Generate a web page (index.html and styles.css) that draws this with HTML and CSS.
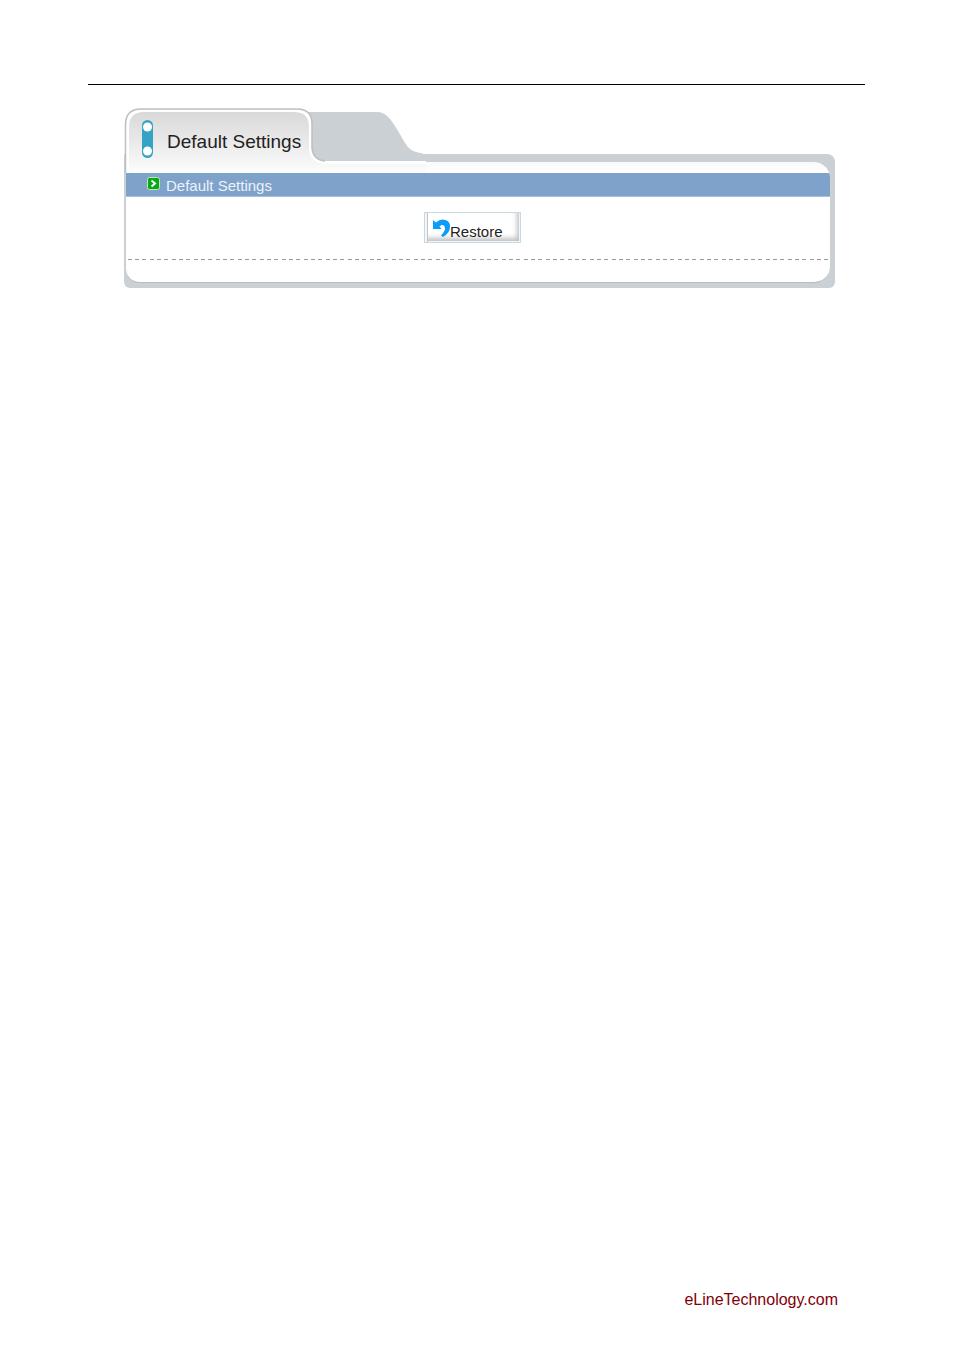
FILE: index.html
```html
<!DOCTYPE html>
<html lang="en">
<head>
<meta charset="utf-8">
<title>Default Settings</title>
<link rel="stylesheet" href="styles.css">
</head>
<body>
<div class="page">
  <hr class="rule">
  <main class="panel">
    <svg class="tab-shape" width="302" height="65" viewBox="0 0 302 65" aria-hidden="true">
      <defs>
        <linearGradient id="tabFill" x1="0" y1="0" x2="0" y2="1">
          <stop offset="0" stop-color="#d9d9d9"/>
          <stop offset="0.5" stop-color="#eaeaea"/>
          <stop offset="1" stop-color="#fdfdfd"/>
        </linearGradient>
      </defs>
      <path fill="#cad0d4" d="M176 4H254Q260 4 266 11C275 22 280 36 286 41C291 45 296 44 302 47V54H176Z"/>
      <path fill="#fff" d="M1 65V17Q1 1 17 1H173Q188 1 188 16V40Q189 52 201 53H302V65Z"/>
      <path fill="none" stroke="#bdbfc0" stroke-width="1.5" d="M1.5 65V17Q1.5 1 17 1H173Q188 1 188 16V40Q189 52 201 53"/>
      <path fill="url(#tabFill)" d="M5 65V19Q5 4 20 4H170Q185 4 185 19V42Q187 55 201 56H302V65Z"/>
    </svg>
    <header class="tab">
      <svg class="tab-icon" width="13" height="38" viewBox="0 0 13 38" aria-hidden="true">
        <rect x="1" width="11" height="38" rx="5.5" fill="#36a2c6"/>
        <circle cx="6.5" cy="7" r="4.5" fill="#fff"/>
        <circle cx="6.5" cy="31" r="4.5" fill="#fff"/>
      </svg>
      <h1 class="tab-title">Default Settings</h1>
    </header>
    <div class="frame">
      <div class="sheet">
        <div class="section-bar">
          <svg class="section-icon" width="13" height="13" viewBox="0 0 13 13" aria-hidden="true">
            <rect x="0.5" y="0.5" width="12" height="12" rx="2" fill="#08a816" stroke="#c3e5bd"/>
            <path d="M4.5 3.5L8 6.5L4.5 9.5" fill="none" stroke="#fff" stroke-width="2"/>
          </svg>
          <h2 class="section-title">Default Settings</h2>
        </div>
        <div class="actions">
          <button class="restore" type="button">
            <svg class="restore-icon" width="18" height="19" viewBox="0 0 18 19" aria-hidden="true">
              <path fill="#0b9dfb" d="M1 1L4 3.5Q7 .5 11 .5Q18 1 18 7.5Q18 14 11 18L9 16.5Q13 12 13 9.5Q13 5.5 9.5 6L7.5 7.5L9.5 10H1Z"/>
            </svg>
            <span>Restore</span>
          </button>
        </div>
        <div class="divider"></div>
      </div>
    </div>
  </main>
  <footer class="footer"><a href="#">eLineTechnology.com</a></footer>
</div>
</body>
</html>
```
FILE: styles.css
```css
* {
  box-sizing: border-box;
}

body {
  margin: 0;
  background: #fff;
  color: #222;
  font-family: "Liberation Sans", Arial, sans-serif;
}

.page {
  display: flex;
  flex-direction: column;
  min-height: 100vh;
  padding: 84px 89px 40px 88px;
}

.rule {
  width: 100%;
  height: 1px;
  margin: 0;
  border: 0;
  background: #000;
}

.panel {
  position: relative;
  margin: 23px 30px 0 36px;
}

.tab-shape {
  position: absolute;
  top: 0;
  left: 0;
  z-index: 1;
}

.tab {
  position: relative;
  z-index: 2;
  display: flex;
  align-items: flex-end;
  gap: 13px;
  height: 46px;
  padding-left: 17px;
}

.tab-icon {
  flex: none;
  margin-bottom: -4px;
}

.tab-title {
  margin: 0;
  font-size: 19px;
  font-weight: 400;
  line-height: 24px;
}

.frame {
  padding: 8px 5px 5px 2px;
  border-radius: 0 8px 6px 6px;
  background: #cad0d4;
}

.sheet {
  overflow: hidden;
  padding: 11px 0 22px;
  border-bottom: 1px solid #b9bcbe;
  border-radius: 0 16px 16px 14px;
  background: linear-gradient(#fafafa, #fff 11px);
}

.section-bar {
  display: flex;
  align-items: center;
  gap: 6px;
  height: 24px;
  padding-left: 21px;
  border-bottom: 1px solid #a9c0db;
  background: #7ea2ca;
}

.section-icon {
  flex: none;
  margin-bottom: 3px;
}

.section-title {
  margin: 0;
  padding-top: 2px;
  color: #edf3fa;
  font-size: 15px;
  font-weight: 400;
  line-height: 18px;
}

.actions {
  display: flex;
  justify-content: center;
  padding: 15px 11px 16px 0;
}

.restore {
  display: flex;
  align-items: flex-end;
  width: 97px;
  height: 31px;
  padding: 0 0 0 7px;
  border: 1px solid #c8d9e4;
  background: #fff;
  box-shadow: inset 2px 0 #f1f5f8, inset 3px 0 #c4c4c4, inset -1px -1px #f1f5f8, inset -3px -4px 5px #c0c0c0;
  color: #222;
  font: 15px/20px "Liberation Sans", Arial, sans-serif;
  cursor: pointer;
}

.restore-icon {
  flex: none;
  margin-bottom: 4px;
}

.divider {
  height: 1px;
  margin: 0 2px;
  background: repeating-linear-gradient(90deg, #999 0 4px, transparent 4px 7px, #999 7px 11px, transparent 11px 14px, #999 14px 18px, transparent 18px 22px);
}

.footer {
  margin-top: auto;
  padding-right: 27px;
  font-size: 16px;
  line-height: 20px;
  text-align: right;
}

.footer a {
  color: #800008;
  text-decoration: none;
}
```
